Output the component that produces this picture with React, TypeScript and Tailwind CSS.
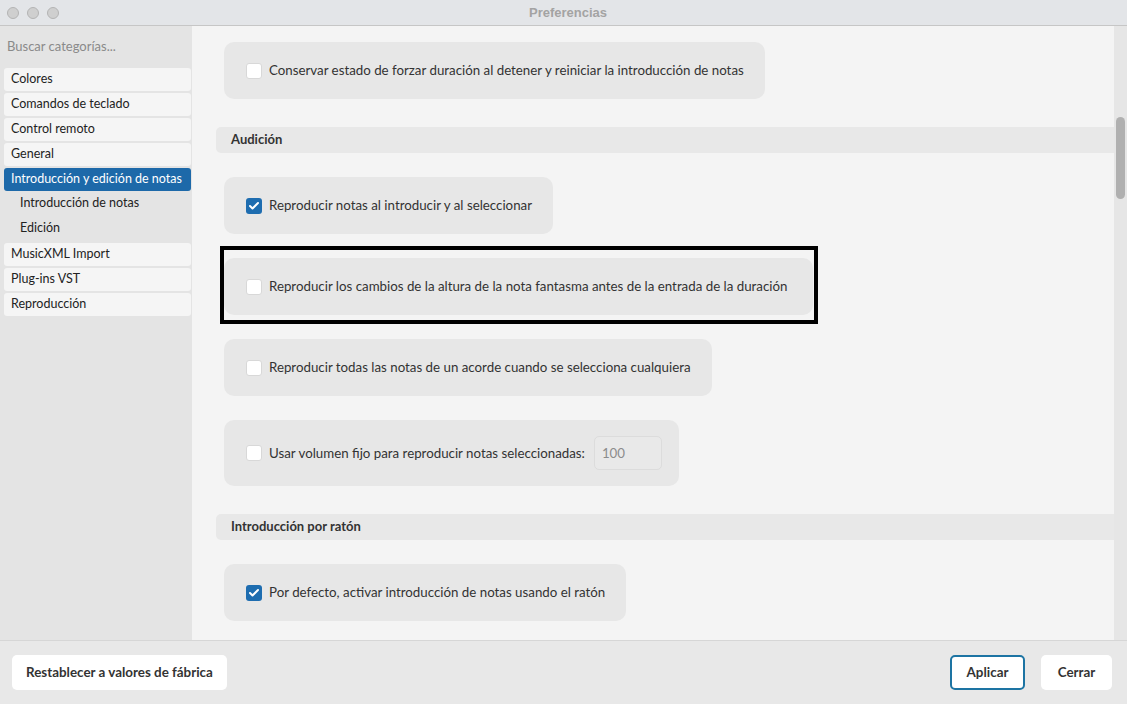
import { Check } from "lucide-react";

const font = { fontFamily: "Lato, 'Noto Sans', sans-serif" };

const Box = ({ checked }: { checked?: boolean }) =>
  checked ? (
    <span className="flex h-4 w-4 shrink-0 items-center justify-center rounded-[3px] bg-[#1e6db0]">
      <Check className="h-3 w-3 text-white" strokeWidth={4} />
    </span>
  ) : (
    <span className="h-4 w-4 shrink-0 rounded-[3px] border border-[#d8d8d8] bg-white" />
  );

const Option = ({ label, checked, extra = "pr-[21px]" }: { label: string; checked?: boolean; extra?: string }) => (
  <div className={"flex w-fit items-center gap-[7px] rounded-[10px] bg-[#e7e7e7] py-[19px] pl-[22px] text-[13.3px] leading-[19px] text-[#333] " + extra}>
    <Box checked={checked} />
    <span>{label}</span>
  </div>
);

const Section = ({ title }: { title: string }) => (
  <div className="flex h-[26px] items-center rounded-l-[5px] bg-[#e8e8e8] pl-[15px] text-[13px] font-bold text-[#333]">{title}</div>
);

const SideItem = ({ label, active }: { label: string; active?: boolean }) => (
  <div
    className={
      "flex h-[23px] items-center rounded-[3px] px-[7px] text-[12.5px] " +
      (active ? "bg-[#1d69a9] text-white" : "bg-[#f5f5f5] text-[#222]")
    }
  >
    {label}
  </div>
);

export default function App() {
  return (
    <div className="flex h-[704px] w-[1127px] flex-col overflow-hidden bg-[#e8e8e8]" style={font}>
      <div className="relative flex h-[26px] shrink-0 items-center border-b border-[#c6c6c6] bg-[#e3e5e8]">
        <div className="flex gap-[8px] pl-[7px]">
          <span className="h-[12px] w-[12px] rounded-full border border-[#b4b4b4] bg-[#cfcfcf]" />
          <span className="h-[12px] w-[12px] rounded-full border border-[#b4b4b4] bg-[#cfcfcf]" />
          <span className="h-[12px] w-[12px] rounded-full border border-[#b4b4b4] bg-[#cfcfcf]" />
        </div>
        <div className="flex-1 pr-[50px] text-center text-[13px] font-bold text-[#a3a3a3]" style={{ fontFamily: "'Liberation Sans', sans-serif" }}>
          Preferencias
        </div>
      </div>

      <div className="flex min-h-0 flex-1 border-b border-[#d6d6d6]">
        <aside className="flex w-[192px] shrink-0 flex-col bg-[#e4e4e4] pr-[1px] pl-[4px]">
          <div className="flex h-[42px] items-center pl-[3px] text-[13px] text-[#8a8a8a]">Buscar categorías...</div>
          <div className="flex flex-col gap-[2px]">
            <SideItem label="Colores" />
            <SideItem label="Comandos de teclado" />
            <SideItem label="Control remoto" />
            <SideItem label="General" />
            <SideItem label="Introducción y edición de notas" active />
            <div className="flex flex-col text-[12.5px] text-[#222]">
              <div className="flex h-[24px] items-center pb-[4px] pl-[16px]">Introducción de notas</div>
              <div className="flex h-[24px] items-center pb-[2px] pl-[16px]">Edición</div>
            </div>
            <SideItem label="MusicXML Import" />
            <SideItem label="Plug-ins VST" />
            <SideItem label="Reproducción" />
          </div>
        </aside>

        <main className="flex min-w-0 flex-1 bg-[#f4f4f4]">
          <div className="flex flex-1 flex-col pl-[32px] pt-[16px]">
            <Option label="Conservar estado de forzar duración al detener y reiniciar la introducción de notas" />
            <div className="-ml-[8px] mt-[28px]">
              <Section title="Audición" />
            </div>
            <div className="mt-[24px]">
              <Option label="Reproducir notas al introducir y al seleccionar" checked />
            </div>
            <div className="relative mt-[24px] w-fit">
              <Option label="Reproducir los cambios de la altura de la nota fantasma antes de la entrada de la duración" extra="pr-[26px]" />
              <div className="pointer-events-none absolute -top-[12px] -bottom-[9px] -left-[4px] -right-[5px] border-4 border-black" />
            </div>
            <div className="mt-[24px]">
              <Option label="Reproducir todas las notas de un acorde cuando se selecciona cualquiera" />
            </div>
            <div className="mt-[24px]">
              <div className="flex w-fit items-center gap-[7px] rounded-[10px] bg-[#e7e7e7] py-[16px] pl-[22px] pr-[17px] text-[13.3px] leading-[19px] text-[#333]">
                <Box />
                <span>Usar volumen fijo para reproducir notas seleccionadas:</span>
                <div className="ml-[2px] flex h-[34px] w-[68px] items-center rounded-[5px] border border-[#dcdcdc] bg-[#e9e9e9] pl-[7px] text-[#8c8c8c]">
                  100
                </div>
              </div>
            </div>
            <div className="-ml-[8px] mt-[28px]">
              <Section title="Introducción por ratón" />
            </div>
            <div className="mt-[24px]">
              <Option label="Por defecto, activar introducción de notas usando el ratón" checked />
            </div>
          </div>
          <div className="w-[13px] shrink-0 bg-[#e6e6e6] pl-[2px] pt-[91px]">
            <div className="h-[82px] w-[9px] rounded-full bg-[#b0b0b0]" />
          </div>
        </main>
      </div>

      <footer className="flex h-[63px] shrink-0 items-center px-[12px]">
        <button className="h-[35px] rounded-[5px] bg-white px-[14px] text-[13.4px] font-bold text-[#333]">Restablecer a valores de fábrica</button>
        <div className="flex-1" />
        <button className="h-[35px] w-[75px] rounded-[5px] border-2 border-[#1d74a3] bg-white text-[13.4px] font-bold text-[#333]">Aplicar</button>
        <button className="ml-[16px] h-[35px] w-[71px] rounded-[5px] bg-white text-[13.4px] font-bold text-[#333]">Cerrar</button>
        <div className="w-[3px]" />
      </footer>
    </div>
  );
}
